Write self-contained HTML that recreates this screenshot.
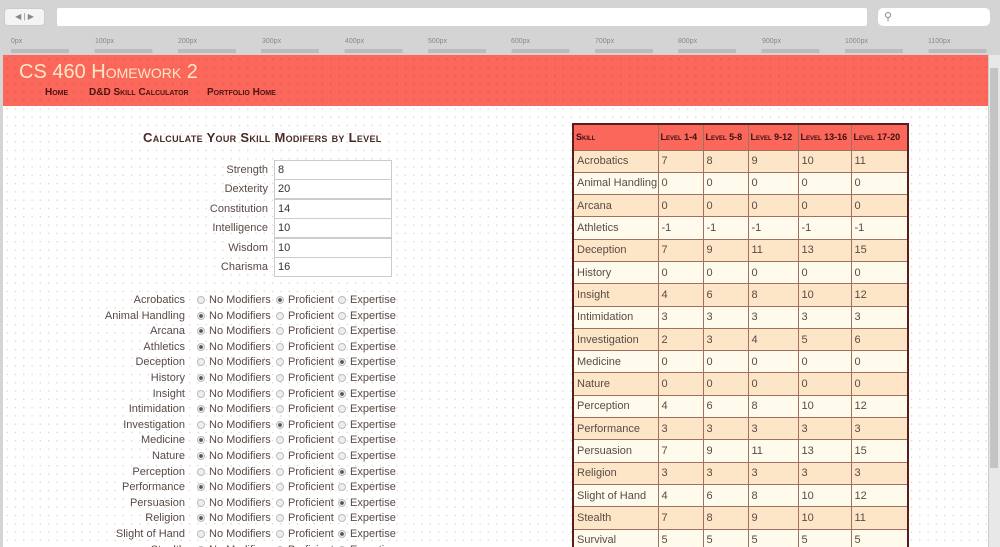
<!DOCTYPE html>
<html><head><meta charset="utf-8"><style>
*{margin:0;padding:0;box-sizing:border-box}
body{width:1000px;height:547px;overflow:hidden;background:#d4d4d4;font-family:"Liberation Sans","DejaVu Sans",sans-serif;position:relative}
.abs{position:absolute}
.page{left:3px;top:55px;width:985px;height:492px;background-color:#fff;background-image:radial-gradient(circle,#d6d6d6 0.5px,transparent 0.9px);background-size:8.3px 8.3px;overflow:hidden}
.hdr{left:0;top:0;width:985px;height:51px;background-color:#fb675a;background-image:radial-gradient(circle,#d85a4f 0.5px,transparent 0.9px);background-size:8.3px 8.3px}
.sc{font-variant:small-caps}
.lbl{position:absolute;text-align:right;width:180px;font-size:11px;color:#5a4a45}
.r{position:absolute;font-size:11px;color:#5a4a45;white-space:nowrap}
.dot{display:inline-block;width:8px;height:8px;border-radius:50%;border:1px solid #bbb;background:#eee;vertical-align:-1px;margin-right:4px}
.dot.on{background:radial-gradient(circle,#555 1.6px,#eee 2.2px)}
input{position:absolute;left:271px;width:118px;height:20px;border:1px solid #ccc;background:#fff;font-size:11px;padding-left:3px;font-family:inherit;color:#333}
table{position:absolute;left:569px;top:68px;width:337px;table-layout:fixed;border-collapse:collapse;border:2px solid #5b1d1a;font-size:11px;color:#5a4a45}
td,th{border:1px solid #a07060;height:22.3px;padding:0 3px;text-align:left;white-space:nowrap;overflow:hidden}
th{background:#fb675a;color:#3a1010;font-variant:small-caps;font-size:9px;height:26px;font-weight:bold;padding:0 2px}
tr:nth-child(even) td{background:#fde6c8}
tr:nth-child(odd) td{background:#fefbed}
</style></head><body>
<div class="abs" style="left:4px;top:8px;width:41px;height:18px;background:#f4f4f4;border-radius:4px;border:1px solid #ccc;font-size:8px;color:#888;text-align:center;line-height:16px">◀ | ▶</div>
<div class="abs" style="left:57px;top:8px;width:810px;height:18px;background:#fff;border-radius:2px"></div>
<div class="abs" style="left:878px;top:8px;width:112px;height:18px;background:#fff;border-radius:5px;color:#888;font-size:11px;padding-left:6px;line-height:18px">⚲</div>
<div class="abs" style="top:38px;left:11px;font-size:7px;color:#888;width:1000px;height:16px">
<span class="abs" style="left:0">0px</span><span class="abs" style="left:84px">100px</span><span class="abs" style="left:167px">200px</span><span class="abs" style="left:251px">300px</span><span class="abs" style="left:334px">400px</span><span class="abs" style="left:417px">500px</span><span class="abs" style="left:500px">600px</span><span class="abs" style="left:584px">700px</span><span class="abs" style="left:667px">800px</span><span class="abs" style="left:751px">900px</span><span class="abs" style="left:834px">1000px</span><span class="abs" style="left:917px">1100px</span></div>
<div class="abs" style="left:11px;top:49px;width:980px;height:4px;background:repeating-linear-gradient(90deg,#bbb 0 58px,transparent 58px 83.4px)"></div>
<div class="abs page">
<div class="abs hdr">
<div class="abs sc" style="left:16px;top:6px;font-size:20px;color:#fde7c8">CS 460 Homework 2</div>
<div class="abs sc" style="left:42px;top:32px;font-size:10px;color:#4a1512;font-weight:bold">Home</div>
<div class="abs sc" style="left:86px;top:32px;font-size:10px;color:#4a1512;font-weight:bold">D&amp;D Skill Calculator</div>
<div class="abs sc" style="left:204px;top:32px;font-size:10px;color:#4a1512;font-weight:bold">Portfolio Home</div>
</div>
<div class="abs sc" style="left:140px;top:75px;font-size:13px;font-weight:bold;color:#4a2a25;letter-spacing:0.3px">Calculate Your Skill Modifers by Level</div>
<div class="lbl" style="left:85px;top:109px">Strength</div><input style="top:105px" value="8">
<div class="lbl" style="left:85px;top:128px">Dexterity</div><input style="top:124px" value="20">
<div class="lbl" style="left:85px;top:148px">Constitution</div><input style="top:144px" value="14">
<div class="lbl" style="left:85px;top:167px">Intelligence</div><input style="top:163px" value="10">
<div class="lbl" style="left:85px;top:187px">Wisdom</div><input style="top:183px" value="10">
<div class="lbl" style="left:85px;top:206px">Charisma</div><input style="top:202px" value="16">
<div id="rad"></div>
<table>
<colgroup><col style="width:85px"><col style="width:45px"><col style="width:45px"><col style="width:50px"><col style="width:53px"><col style="width:57px"></colgroup>
<tr><th>Skill</th><th>Level 1-4</th><th>Level 5-8</th><th>Level 9-12</th><th>Level 13-16</th><th>Level 17-20</th></tr>
<tr><td>Acrobatics</td><td>7</td><td>8</td><td>9</td><td>10</td><td>11</td></tr>
<tr><td>Animal Handling</td><td>0</td><td>0</td><td>0</td><td>0</td><td>0</td></tr>
<tr><td>Arcana</td><td>0</td><td>0</td><td>0</td><td>0</td><td>0</td></tr>
<tr><td>Athletics</td><td>-1</td><td>-1</td><td>-1</td><td>-1</td><td>-1</td></tr>
<tr><td>Deception</td><td>7</td><td>9</td><td>11</td><td>13</td><td>15</td></tr>
<tr><td>History</td><td>0</td><td>0</td><td>0</td><td>0</td><td>0</td></tr>
<tr><td>Insight</td><td>4</td><td>6</td><td>8</td><td>10</td><td>12</td></tr>
<tr><td>Intimidation</td><td>3</td><td>3</td><td>3</td><td>3</td><td>3</td></tr>
<tr><td>Investigation</td><td>2</td><td>3</td><td>4</td><td>5</td><td>6</td></tr>
<tr><td>Medicine</td><td>0</td><td>0</td><td>0</td><td>0</td><td>0</td></tr>
<tr><td>Nature</td><td>0</td><td>0</td><td>0</td><td>0</td><td>0</td></tr>
<tr><td>Perception</td><td>4</td><td>6</td><td>8</td><td>10</td><td>12</td></tr>
<tr><td>Performance</td><td>3</td><td>3</td><td>3</td><td>3</td><td>3</td></tr>
<tr><td>Persuasion</td><td>7</td><td>9</td><td>11</td><td>13</td><td>15</td></tr>
<tr><td>Religion</td><td>3</td><td>3</td><td>3</td><td>3</td><td>3</td></tr>
<tr><td>Slight of Hand</td><td>4</td><td>6</td><td>8</td><td>10</td><td>12</td></tr>
<tr><td>Stealth</td><td>7</td><td>8</td><td>9</td><td>10</td><td>11</td></tr>
<tr><td>Survival</td><td>5</td><td>5</td><td>5</td><td>5</td><td>5</td></tr>
</table>
</div>
<div class="abs" style="left:988px;top:55px;width:12px;height:492px;background:#e8e8e8;border-left:1px solid #ccc"></div>
<div class="abs" style="left:990px;top:68px;width:8px;height:400px;background:#c4c4c4"></div>
<script>
var s=[["Acrobatics",1],["Animal Handling",0],["Arcana",0],["Athletics",0],["Deception",2],["History",0],["Insight",2],["Intimidation",0],["Investigation",1],["Medicine",0],["Nature",0],["Perception",2],["Performance",0],["Persuasion",2],["Religion",0],["Slight of Hand",2],["Stealth",1],["Survival",0]];
var h="";
s.forEach(function(a,i){var y=239+i*15.6;
h+='<div class="lbl" style="left:2px;top:'+y+'px">'+a[0]+'</div>';
var xs=[194,273,335],t=["No Modifiers","Proficient","Expertise"];
for(var k=0;k<3;k++)h+='<div class="r" style="left:'+xs[k]+'px;top:'+y+'px"><span class="dot'+(a[1]==k?' on':'')+'"></span>'+t[k]+'</div>';});
document.getElementById("rad").innerHTML=h;
</script>
</body></html>
